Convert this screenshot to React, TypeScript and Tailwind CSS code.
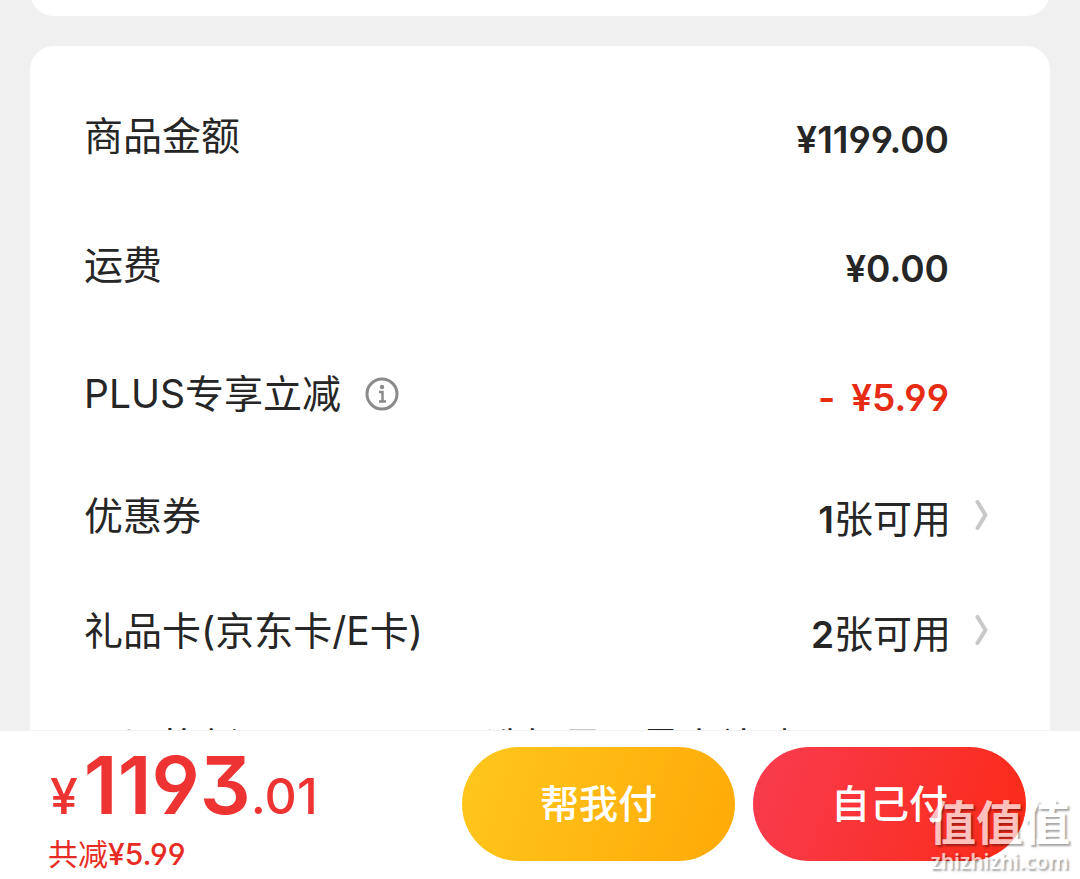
import type { ReactNode } from "react";

const InfoIcon = () => (
  <svg viewBox="0 0 34 34" className="size-[34px] shrink-0" aria-hidden="true">
    <circle cx="17" cy="17" r="15" fill="none" stroke="#8a8a8a" strokeWidth="3" />
    <circle cx="17" cy="10" r="2.2" fill="#8a8a8a" />
    <path d="M14 15h3.5v8.5M14 24.5h7" fill="none" stroke="#8a8a8a" strokeWidth="2.5" />
  </svg>
);

const ChevronIcon = () => (
  <svg viewBox="0 0 14 32" className="h-8 w-[14px] shrink-0" aria-hidden="true">
    <path
      d="M2.5 2L10.5 15L2.5 28"
      fill="none"
      stroke="#c8c8c8"
      strokeWidth="4"
      strokeLinecap="round"
      strokeLinejoin="round"
    />
  </svg>
);

const Label = ({ text, info }: { text: string; info?: boolean }) => (
  <dt className="flex items-center gap-6">
    {text}
    {info && (
      <button type="button" aria-label="说明">
        <InfoIcon />
      </button>
    )}
  </dt>
);

type RowProps = {
  label: string;
  info?: boolean;
  red?: boolean;
  children: ReactNode;
};

const Row = ({ label, info, red, children }: RowProps) => (
  <div className="flex h-[129px] items-center justify-between pr-10">
    <Label text={label} info={info} />
    <dd
      className={
        red
          ? "flex gap-4 pt-2 text-[37px] font-semibold text-[#e72c14]"
          : "pt-2 text-[37px] font-semibold"
      }
    >
      {children}
    </dd>
  </div>
);

const LinkRow = ({ label, count }: { label: string; count: number }) => (
  <div className="flex h-[115px] items-center justify-between">
    <Label text={label} />
    <dd>
      <button type="button" className="flex items-center gap-6">
        <span className="pt-2">
          <span className="text-[37px] font-semibold">{count}</span>张可用
        </span>
        <ChevronIcon />
      </button>
    </dd>
  </div>
);

export default function App() {
  return (
    <div className="flex h-screen flex-col overflow-hidden bg-[#f0f0f0] font-['Inter','Noto_Sans_CJK_SC',sans-serif] text-[#262626] [font-feature-settings:'ss01','cv09']">
      <main className="flex min-h-0 flex-1 flex-col gap-[30px] overflow-hidden px-[30px]">
        <section className="relative h-4 shrink-0">
          <div className="absolute inset-x-0 bottom-0 h-12 rounded-b-3xl bg-white" />
        </section>
        <section className="shrink-0 rounded-t-3xl bg-white pt-[25px] pr-[61px] pl-[54px]">
          <dl className="flex flex-col text-[39px] leading-[56px]">
            <Row label="商品金额">¥1199.00</Row>
            <Row label="运费">¥0.00</Row>
            <Row label="PLUS专享立减" info red>
              <span>-</span>
              <span>¥5.99</span>
            </Row>
            <LinkRow label="优惠券" count={1} />
            <LinkRow label="礼品卡(京东卡/E卡)" count={2} />
            <div className="flex h-[117px] items-center justify-between">
              <Label text="以旧换新" info />
              <dd className="pr-48">选择是，最高补贴</dd>
            </div>
          </dl>
        </section>
      </main>

      <footer className="relative flex h-[149px] shrink-0 items-start justify-between border-t border-[#f2f2f2] bg-white pt-4 pr-[54px] pl-12">
        <div className="text-[#ee3333]">
          <p className="flex items-baseline pl-0.5 text-[50px] leading-[76px] font-medium">
            <span className="pr-1.5">¥</span>
            <span className="text-[80px] font-semibold">1193</span>
            <span>.01</span>
          </p>
          <p className="text-[30px] leading-10 font-medium text-[#e72c24]">
            <span className="font-normal">共减</span>¥5.99
          </p>
        </div>
        <div className="flex gap-[18px] text-[39px] font-medium text-white">
          <button
            type="button"
            className="h-[114px] w-[273px] rounded-full bg-linear-[110deg] from-[#ffc71c] to-[#ffa907]"
          >
            帮我付
          </button>
          <button
            type="button"
            className="h-[114px] w-[273px] rounded-full bg-linear-[110deg] from-[#f83c50] to-[#fb2a16]"
          >
            自己付
          </button>
        </div>
        <div className="pointer-events-none absolute right-[10px] bottom-1.5 text-center text-white opacity-70 [text-shadow:2px_2px_2px_rgba(0,0,0,0.5)]">
          <p className="text-[47px] leading-[52px] font-bold">值值值</p>
          <p className="font-['Noto_Sans'] text-[21px] leading-6 font-semibold">
            zhizhizhi.com
          </p>
        </div>
      </footer>
    </div>
  );
}
